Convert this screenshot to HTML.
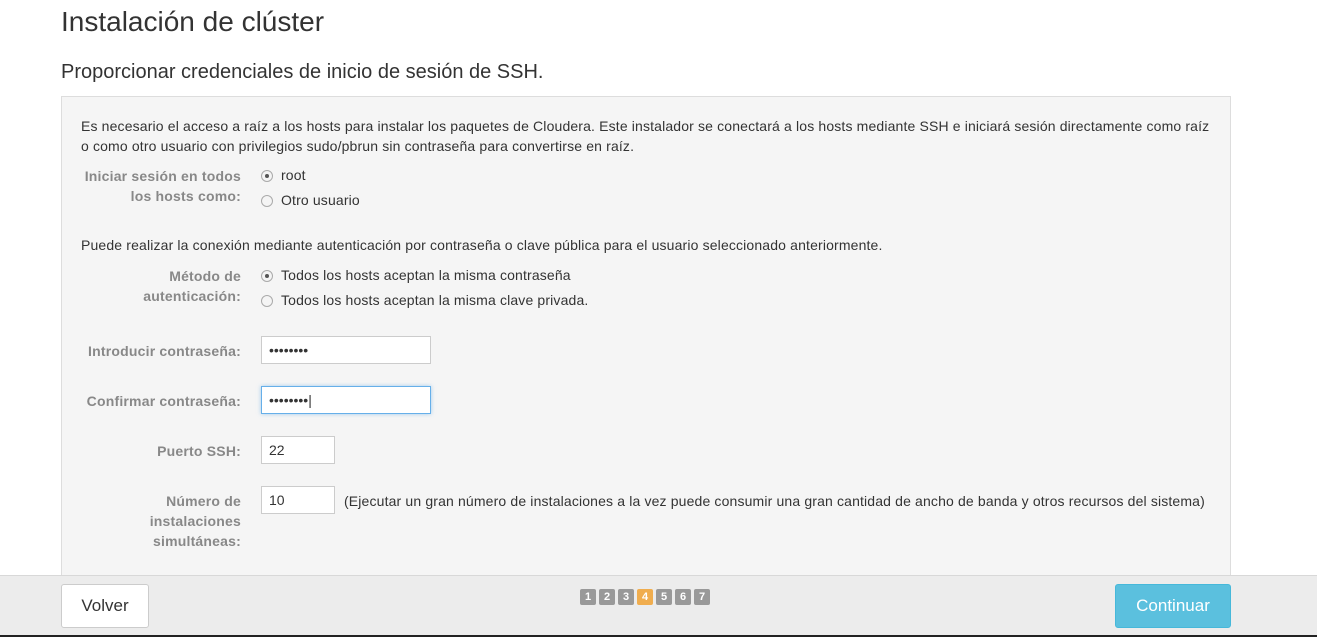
<!DOCTYPE html>
<html><head><meta charset="utf-8"><style>
body{margin:0;width:1317px;height:637px;overflow:hidden;background:#fff;font-family:"Liberation Sans",Arial,sans-serif;color:#333;position:relative}
h1{position:absolute;left:61px;top:6px;margin:0;font-size:28px;font-weight:normal;color:#333}
h2{position:absolute;left:61px;top:61px;margin:0;font-size:20px;font-weight:normal;color:#333}
.panel{position:absolute;left:61px;top:96px;width:1168px;height:490px;background:#f5f5f5;border:1px solid #ddd}
.t{position:absolute;font-size:14px;letter-spacing:0.15px;color:#333;white-space:nowrap}
.l{position:absolute;font-size:14px;letter-spacing:0.2px;font-weight:bold;color:#888;text-align:right;right:1076px;line-height:20px;white-space:nowrap}
.r{position:absolute;width:10px;height:10px;border:1px solid #aaa;border-radius:50%;background:#f4f4f4}
.r.on::after{content:"";position:absolute;left:3px;top:3px;width:4px;height:4px;border-radius:50%;background:#555}
.in{position:absolute;height:28px;border:1px solid #ccc;background:#fff;box-sizing:border-box;font-size:14px;padding:0 7px;line-height:26px}
.foot{position:absolute;left:0;top:575px;width:1317px;height:60px;background:#ececec;border-top:1px solid #d8d8d8}
.bot{position:absolute;left:0;top:635px;width:1317px;height:2px;background:#222}
.btn{position:absolute;top:584px;height:44px;box-sizing:border-box;border-radius:3px;font-size:17px;line-height:42px;text-align:center}
.s{display:inline-block;width:16px;height:16px;background:#999;color:#fff;font-size:11px;line-height:16px;text-align:center;border-radius:2px;margin-right:3px;font-weight:bold}
</style></head><body>
<h1>Instalación de clúster</h1>
<h2>Proporcionar credenciales de inicio de sesión de SSH.</h2>
<div class="panel"></div>
<div class="t" style="left:81px;top:118px">Es necesario el acceso a raíz a los hosts para instalar los paquetes de Cloudera. Este instalador se conectará a los hosts mediante SSH e iniciará sesión directamente como raíz</div>
<div class="t" style="left:81px;top:138px">o como otro usuario con privilegios sudo/pbrun sin contraseña para convertirse en raíz.</div>
<div class="l" style="top:166px">Iniciar sesión en todos<br>los hosts como:</div>
<div class="r on" style="left:261px;top:170px"></div><div class="t" style="left:281px;top:167px">root</div>
<div class="r" style="left:261px;top:195px"></div><div class="t" style="left:281px;top:192px">Otro usuario</div>
<div class="t" style="left:81px;top:237px">Puede realizar la conexión mediante autenticación por contraseña o clave pública para el usuario seleccionado anteriormente.</div>
<div class="l" style="top:266px">Método de<br>autenticación:</div>
<div class="r on" style="left:261px;top:270px"></div><div class="t" style="left:281px;top:267px">Todos los hosts aceptan la misma contraseña</div>
<div class="r" style="left:261px;top:295px"></div><div class="t" style="left:281px;top:292px">Todos los hosts aceptan la misma clave privada.</div>
<div class="l" style="top:341px">Introducir contraseña:</div>
<div class="in" style="left:261px;top:336px;width:170px">••••••••</div>
<div class="l" style="top:391px">Confirmar contraseña:</div>
<div class="in" style="left:261px;top:386px;width:170px;border-color:#66afe9;box-shadow:0 0 4px rgba(102,175,233,.6)">••••••••|</div>
<div class="l" style="top:441px">Puerto SSH:</div>
<div class="in" style="left:261px;top:436px;width:74px">22</div>
<div class="l" style="top:491px">Número de<br>instalaciones<br>simultáneas:</div>
<div class="in" style="left:261px;top:486px;width:74px">10</div>
<div class="t" style="left:344px;top:493px">(Ejecutar un gran número de instalaciones a la vez puede consumir una gran cantidad de ancho de banda y otros recursos del sistema)</div>
<div class="foot"></div><div class="bot"></div>
<div class="btn" style="left:61px;width:88px;background:#fff;border:1px solid #ccc;color:#333">Volver</div>
<div style="position:absolute;left:580px;top:587px;white-space:nowrap"><span class="s">1</span><span class="s">2</span><span class="s">3</span><span class="s" style="background:#f0ad4e">4</span><span class="s">5</span><span class="s">6</span><span class="s">7</span></div>
<div class="btn" style="left:1115px;width:116px;background:#5bc0de;border:1px solid #46b8da;color:#fff">Continuar</div>
</body></html>
